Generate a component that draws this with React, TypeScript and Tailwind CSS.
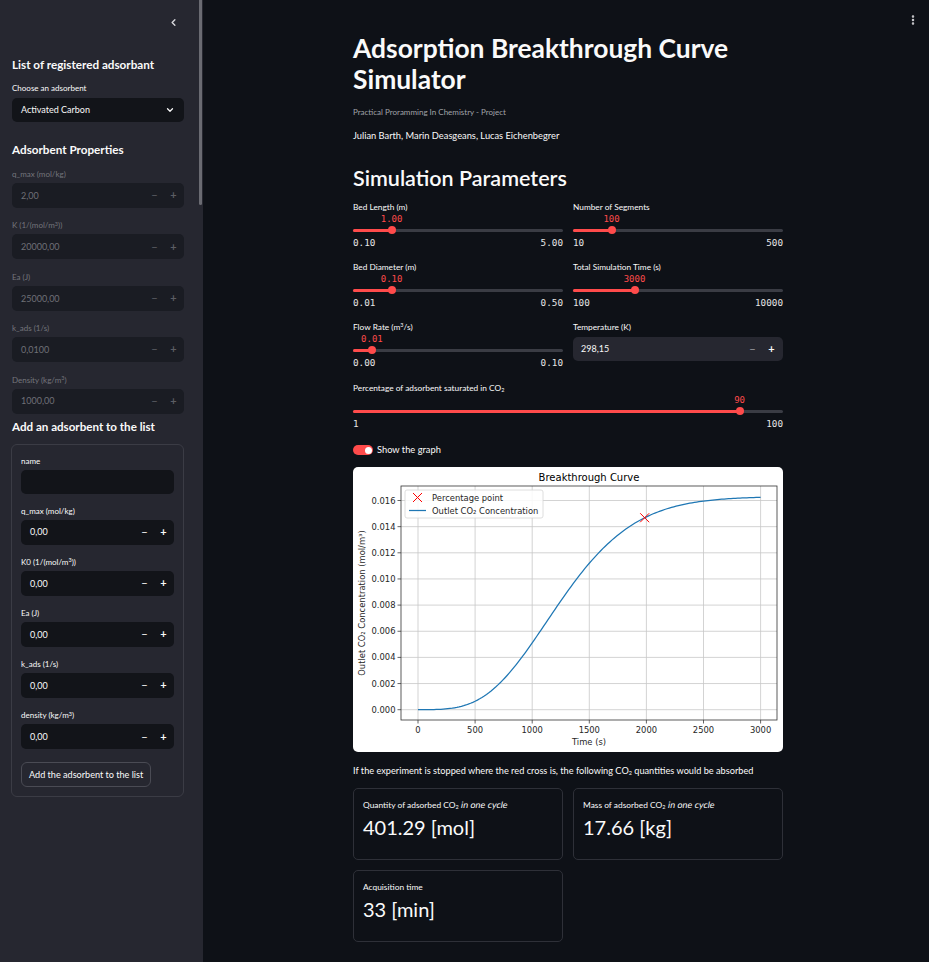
import { ChevronDown, ChevronLeft, EllipsisVertical } from "lucide-react";

const C0 = 0.0163;
const MU = 35.17;
const SIG = 7.3;

const tx = (t: number) => 65 + t * 0.1142;
const cy = (c: number) => 242.7 - c * 13075;

// Abramowitz-Stegun erf approximation
function erf(x: number) {
  const s = x < 0 ? -1 : 1;
  const a = Math.abs(x);
  const t = 1 / (1 + 0.3275911 * a);
  const y =
    1 -
    ((((1.061405429 * t - 1.453152027) * t + 1.421413741) * t - 0.284496736) * t + 0.254829592) *
      t *
      Math.exp(-a * a);
  return s * y;
}

const conc = (t: number) => C0 * 0.5 * (1 + erf((Math.sqrt(t) - MU) / (SIG * Math.SQRT2)));

function curvePath() {
  let d = "";
  for (let t = 0; t <= 3000; t += 20) {
    d += `${t === 0 ? "M" : "L"}${tx(t).toFixed(2)},${cy(conc(t)).toFixed(2)} `;
  }
  return d;
}

function Chart() {
  const xs = [0, 500, 1000, 1500, 2000, 2500, 3000];
  const ys = [0, 0.002, 0.004, 0.006, 0.008, 0.01, 0.012, 0.014, 0.016];
  const font = "DejaVu Sans, sans-serif";
  const mx = tx(1985);
  const my = cy(conc(1985));
  return (
    <svg width="430" height="285" viewBox="0 0 430 285" className="block">
      <rect x="0" y="0" width="430" height="285" rx="5" fill="#ffffff" />
      <text x="236" y="14" fontSize="10" textAnchor="middle" fontFamily={font} fill="#000">
        Breakthrough Curve
      </text>
      {xs.map((t) => (
        <g key={t}>
          <line x1={tx(t)} x2={tx(t)} y1="19" y2="253" stroke="#c8c8c8" strokeWidth="0.8" />
          <line x1={tx(t)} x2={tx(t)} y1="253" y2="256.5" stroke="#222" strokeWidth="0.7" />
          <text x={tx(t)} y="266" fontSize="8.4" textAnchor="middle" fontFamily={font} fill="#262626">
            {t}
          </text>
        </g>
      ))}
      {ys.map((c) => (
        <g key={c}>
          <line x1="48" x2="424" y1={cy(c)} y2={cy(c)} stroke="#c8c8c8" strokeWidth="0.8" />
          <line x1="44.5" x2="48" y1={cy(c)} y2={cy(c)} stroke="#222" strokeWidth="0.7" />
          <text x="42.5" y={cy(c) + 3} fontSize="8.4" textAnchor="end" fontFamily={font} fill="#262626">
            {c.toFixed(3)}
          </text>
        </g>
      ))}
      <rect x="48" y="19" width="376" height="234" fill="none" stroke="#333" strokeWidth="0.8" />
      <path d={curvePath()} fill="none" stroke="#1f77b4" strokeWidth="1.25" />
      <g stroke="#ff0000" strokeWidth="1">
        <line x1={mx - 4.5} y1={my - 4.5} x2={mx + 4.5} y2={my + 4.5} />
        <line x1={mx - 4.5} y1={my + 4.5} x2={mx + 4.5} y2={my - 4.5} />
      </g>
      <text x="236" y="278" fontSize="8.4" textAnchor="middle" fontFamily={font} fill="#262626">
        Time (s)
      </text>
      <text
        x="0"
        y="0"
        fontSize="8.4"
        textAnchor="middle"
        fontFamily={font}
        fill="#262626"
        transform="translate(12 136) rotate(-90)"
      >
        Outlet CO₂ Concentration (mol/m³)
      </text>
      {/* legend */}
      <rect x="52" y="23" width="138" height="28" rx="2" fill="#ffffff" fillOpacity="0.85" stroke="#d6d6d6" strokeWidth="0.8" />
      <g stroke="#ff0000" strokeWidth="1">
        <line x1="60" y1="26" x2="69" y2="35" />
        <line x1="60" y1="35" x2="69" y2="26" />
      </g>
      <text x="79" y="33.5" fontSize="8.4" fontFamily={font} fill="#262626">
        Percentage point
      </text>
      <line x1="56" x2="73" y1="43.5" y2="43.5" stroke="#1f77b4" strokeWidth="1.25" />
      <text x="79" y="46.5" fontSize="8.4" fontFamily={font} fill="#262626">
        Outlet CO₂ Concentration
      </text>
    </svg>
  );
}

type SliderProps = { label: React.ReactNode; value: string; min: string; max: string; pos: number };

function Slider({ label, value, min, max, pos }: SliderProps) {
  const pct = `${pos * 100}%`;
  return (
    <div className="flex flex-col">
      <div className="text-[8.3px] leading-[12px] text-[#fafafa]">{label}</div>
      <div className="relative h-[12px]">
        <span
          className="absolute -translate-x-1/2 font-['DejaVu_Sans_Mono',monospace] text-[9px] leading-[12px] text-[#ff4b4b]"
          style={{ left: pct }}
        >
          {value}
        </span>
      </div>
      <div className="relative flex h-[10px] items-center">
        <div className="h-[3px] w-full rounded-full bg-[#3a3c44]" />
        <div className="absolute left-0 h-[3px] rounded-full bg-[#ff4b4b]" style={{ width: pct }} />
        <div
          className="absolute h-[8px] w-[8px] -translate-x-1/2 rounded-full bg-[#ff4b4b]"
          style={{ left: pct }}
        />
      </div>
      <div className="mt-[2px] flex justify-between font-['DejaVu_Sans_Mono',monospace] text-[9.3px] leading-[12px] text-[#e6e6e6]">
        <span>{min}</span>
        <span>{max}</span>
      </div>
    </div>
  );
}

function NumInput({ value, variant }: { value: string; variant: "disabled" | "form" }) {
  const box = variant === "disabled" ? "bg-[#1a1c23] text-[#6f7077]" : "bg-[#121419] text-[#fafafa]";
  const steps = variant === "disabled" ? "text-[#5c5d64]" : "text-[#fafafa]";
  return (
    <div className={`flex h-[25px] items-center rounded-[5px] pl-[9px] pr-[1px] text-[9px] ${box}`}>
      <span className="flex-1">{value}</span>
      <span className={`w-[19px] text-center text-[11px] ${steps}`}>−</span>
      <span className={`w-[19px] text-center text-[11px] font-bold ${steps}`}>+</span>
    </div>
  );
}

function SideField({ label, value, last }: { label: React.ReactNode; value: string; last?: boolean }) {
  return (
    <div className={`flex flex-col gap-[2px] ${last ? "" : "mb-[10.4px]"}`}>
      <div className="text-[8px] leading-[14px] text-[#74757c]">{label}</div>
      <NumInput value={value} variant="disabled" />
    </div>
  );
}

function FormField({ label, value }: { label: React.ReactNode; value: string }) {
  return (
    <div className="mb-[10.2px] flex flex-col gap-[2px]">
      <div className="text-[8px] leading-[14px] text-[#fafafa]">{label}</div>
      <NumInput value={value} variant="form" />
    </div>
  );
}

function Metric({ label, value }: { label: React.ReactNode; value: string }) {
  return (
    <div className="h-[72px] rounded-[5px] border border-[#2e3038] px-[9px] pt-[9px]">
      <div className="text-[8.4px] leading-[14px] text-[#fafafa]">{label}</div>
      <div className="mt-[1px] text-[20px] leading-[28px] text-[#fafafa]">{value}</div>
    </div>
  );
}

const Sup3 = () => <sup className="text-[5.5px]">3</sup>;
const Sub2 = () => <sub className="text-[5.5px]">2</sub>;
const Slanted = ({ children }: { children: React.ReactNode }) => (
  <span className="inline-block -skew-x-[10deg] text-[9px]">{children}</span>
);

export default function App() {
  return (
    <div className="flex min-h-[962px] w-full bg-[#0e1117] font-['Lato',sans-serif] text-[#fafafa]">
      {/* Sidebar */}
      <aside className="relative w-[203px] shrink-0 bg-[#262730] pl-[12px] pr-[19px]">
        <div className="absolute right-[1px] top-0 h-[205px] w-[3px] rounded-b-full bg-[#6a6b72]" />
        <div className="flex h-[44px] items-center justify-end pr-[5px]">
          <ChevronLeft size={11} strokeWidth={3} className="text-[#d8d8dc]" />
        </div>
        <div className="mt-[11px] text-[11.7px] font-bold leading-[18px]">List of registered adsorbant</div>
        <div className="mt-[8px] text-[8px] leading-[14px]">Choose an adsorbent</div>
        <div className="mt-[3px] flex h-[24px] items-center justify-between rounded-[5px] bg-[#121419] pl-[9px] pr-[9px] text-[9px]">
          <span>Activated Carbon</span>
          <ChevronDown size={10} strokeWidth={3} />
        </div>
        <div className="mt-[18px] text-[11.7px] font-bold leading-[18px]">Adsorbent Properties</div>
        <div className="mt-[9px]">
          <SideField label="q_max (mol/kg)" value="2,00" />
          <SideField label={<>K (1/(mol/m<Sup3 />))</>} value="20000,00" />
          <SideField label="Ea (J)" value="25000,00" />
          <SideField label="k_ads (1/s)" value="0,0100" />
          <SideField label={<>Density (kg/m<Sup3 />)</>} value="1000,00" last />
        </div>
        <div className="mt-[4px] text-[11.6px] font-bold leading-[18px]">Add an adsorbent to the list</div>
        <div className="-ml-[1px] mt-[8px] rounded-[6px] border border-[#3b3c45] px-[9px] pb-[9px] pt-[9px]">
          <div className="mb-[10px] flex flex-col gap-[2px]">
            <div className="text-[8px] leading-[14px]">name</div>
            <div className="h-[24px] rounded-[5px] bg-[#121419]" />
          </div>
          <FormField label="q_max (mol/kg)" value="0,00" />
          <FormField label={<>K0 (1/(mol/m<Sup3 />))</>} value="0,00" />
          <FormField label="Ea (J)" value="0,00" />
          <FormField label="k_ads (1/s)" value="0,00" />
          <FormField label={<>density (kg/m<Sup3 />)</>} value="0,00" />
          <button className="h-[25px] rounded-[6px] border border-[#4a4b54] bg-[#262730] px-[7px] text-[9.1px] text-[#fafafa]">
            Add the adsorbent to the list
          </button>
        </div>
      </aside>

      {/* Main */}
      <main className="relative flex-1">
        <div className="absolute right-[10px] top-[14px] text-[#d0d0d4]">
          <EllipsisVertical size={12} strokeWidth={3} />
        </div>
        <div className="ml-[150px] w-[430px] pb-[18px] pt-[33px]">
          <h1 className="text-[26.4px] font-bold leading-[31px]">Adsorption Breakthrough Curve Simulator</h1>
          <div className="mt-[11px] text-[8px] leading-[12px] text-[#a1a3a9]">
            Practical Proramming In Chemistry - Project
          </div>
          <div className="mt-[11px] text-[9.3px] leading-[14px]">Julian Barth, Marin Deasgeans, Lucas Eichenbegrer</div>
          <h2 className="mt-[22px] text-[21.5px] font-semibold leading-[26px]">Simulation Parameters</h2>

          <div className="mt-[10px] grid grid-cols-2 gap-x-[10px] gap-y-[12px]">
            <Slider label="Bed Length (m)" value="1.00" min="0.10" max="5.00" pos={0.9 / 4.9} />
            <Slider label="Number of Segments" value="100" min="10" max="500" pos={90 / 490} />
            <Slider label="Bed Diameter (m)" value="0.10" min="0.01" max="0.50" pos={0.09 / 0.49} />
            <Slider label="Total Simulation Time (s)" value="3000" min="100" max="10000" pos={2900 / 9900} />
            <Slider label={<>Flow Rate (m<Sup3 />/s)</>} value="0.01" min="0.00" max="0.10" pos={0.09} />
            <div className="flex flex-col gap-[4px]">
              <div className="text-[8.3px] leading-[12px]">Temperature (K)</div>
              <div className="flex h-[24px] items-center rounded-[5px] bg-[#262730] pl-[8px] pr-[2px] text-[9px]">
                <span className="flex-1">298,15</span>
                <span className="w-[19px] text-center text-[11px] text-[#9a9ba1]">−</span>
                <span className="w-[19px] text-center text-[11px] font-bold">+</span>
              </div>
            </div>
          </div>

          <div className="mt-[13px]">
            <Slider
              label={<>Percentage of adsorbent saturated in CO<Sub2 /></>}
              value="90"
              min="1"
              max="100"
              pos={89 / 99}
            />
          </div>

          <div className="mt-[14px] flex h-[12px] items-center gap-[4px]">
            <div className="flex h-[10px] w-[20px] items-center justify-end rounded-full bg-[#ff4b4b] pr-[1.5px]">
              <div className="h-[7px] w-[7px] rounded-full bg-white" />
            </div>
            <span className="text-[9.3px]">Show the graph</span>
          </div>

          <div className="mt-[11px]">
            <Chart />
          </div>

          <div className="mt-[12px] text-[9.2px] leading-[14px]">
            If the experiment is stopped where the red cross is, the following CO<Sub2 /> quantities would be absorbed
          </div>

          <div className="mt-[10px] grid grid-cols-2 gap-[10px]">
            <Metric
              label={
                <>
                  Quantity of adsorbed CO<Sub2 /> <Slanted>in one cycle</Slanted>
                </>
              }
              value="401.29 [mol]"
            />
            <Metric
              label={
                <>
                  Mass of adsorbed CO<Sub2 /> <Slanted>in one cycle</Slanted>
                </>
              }
              value="17.66 [kg]"
            />
            <Metric label="Acquisition time" value="33 [min]" />
          </div>
        </div>
      </main>
    </div>
  );
}
